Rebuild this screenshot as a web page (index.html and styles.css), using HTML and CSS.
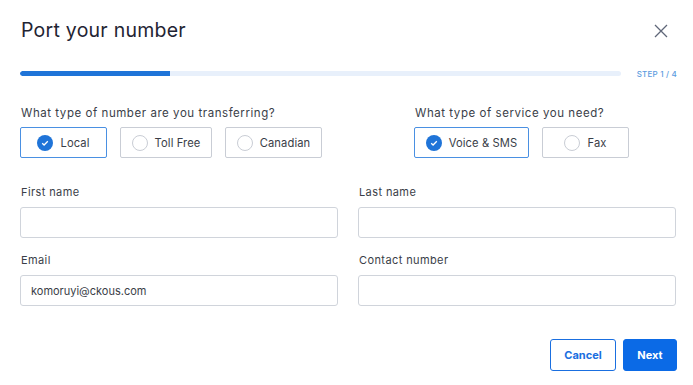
FILE: index.html
```html
<!DOCTYPE html>
<html>
<head>
<meta charset="utf-8">
<link rel="stylesheet" href="styles.css">
</head>
<body>
<div class="modal">
  <div class="header">
    <h1 class="title">Port your number</h1>
    <button class="close" aria-label="Close">
      <svg width="14" height="14" viewBox="0 0 14 14"><path d="M1 1L13 13M13 1L1 13" stroke="#5f6778" stroke-width="1.3" fill="none"/></svg>
    </button>
  </div>
  <div class="progress-row">
    <div class="track"><div class="fill" style="width:25%"></div></div>
    <span class="step">STEP 1 / 4</span>
  </div>
  <div class="choices">
    <div class="group group-left">
      <div class="label">What type of number are you transferring?</div>
      <div class="options">
        <div class="opt sel w-local"><span class="check"><svg width="16" height="16" viewBox="0 0 16 16"><circle cx="8" cy="8" r="8" fill="#1f74d8"/><path d="M5.2 8.2L7.1 10L10.8 6.3" stroke="#fff" stroke-width="1.3" fill="none"/></svg></span>Local</div>
        <div class="opt w-toll"><span class="circle"></span>Toll Free</div>
        <div class="opt w-can"><span class="circle"></span>Canadian</div>
      </div>
    </div>
    <div class="group">
      <div class="label">What type of service you need?</div>
      <div class="options">
        <div class="opt sel w-voice"><span class="check"><svg width="16" height="16" viewBox="0 0 16 16"><circle cx="8" cy="8" r="8" fill="#1f74d8"/><path d="M5.2 8.2L7.1 10L10.8 6.3" stroke="#fff" stroke-width="1.3" fill="none"/></svg></span>Voice &amp; SMS</div>
        <div class="opt w-fax"><span class="circle"></span>Fax</div>
      </div>
    </div>
  </div>
  <div class="fields">
    <div class="field"><div class="flabel">First name</div><div class="input"></div></div>
    <div class="field"><div class="flabel">Last name</div><div class="input"></div></div>
    <div class="field"><div class="flabel">Email</div><div class="input">komoruyi@ckous.com</div></div>
    <div class="field"><div class="flabel">Contact number</div><div class="input"></div></div>
  </div>
  <div class="actions">
    <button class="btn cancel">Cancel</button>
    <button class="btn next">Next</button>
  </div>
</div>
</body>
</html>
```
FILE: styles.css
```css
* { box-sizing: border-box; }
html, body { margin: 0; padding: 0; background: #fff; }
body { font-family: Inter, "Noto Sans", sans-serif; color: #2a2e38; }
.modal { width: 693px; height: 385px; padding: 17px 16px 0 20px; }
.header { display: flex; justify-content: space-between; align-items: center; height: 26px; }
.title { margin: 0 0 0 1px; font-size: 19.5px; font-weight: 400; color: #1f2433; letter-spacing: 0.25px; }
.close { background: none; border: none; padding: 0; margin-right: 9px; width: 14px; height: 14px; display: flex; margin-top: 2px; }
.progress-row { display: flex; align-items: center; margin-top: 28px; height: 5px; }
.track { width: 602px; height: 5px; background: #e8f0fb; border-radius: 3px; overflow: hidden; }
.fill { height: 100%; background: #1f74d8; border-radius: 3px 0 0 3px; }
.step { margin-left: 16px; font-size: 8px; font-weight: 500; color: #5b9be0; letter-spacing: 0.2px; white-space: nowrap; }
.choices { display: flex; margin-top: 30px; }
.group-left { width: 394px; }
.label { font-size: 11.5px; color: #3a3e48; letter-spacing: 0.55px; margin-left: 1px; line-height: 14px; }
.options { display: flex; gap: 13px; margin-top: 7px; }
.opt { height: 31px; border: 1px solid #c9cdd5; border-radius: 2px; display: flex; align-items: center; justify-content: center; font-size: 11.2px; color: #3a3e48; gap: 7px; letter-spacing: 0.1px; }
.opt.sel { border-color: #4a90e2; }
.w-local { width: 87px; }
.w-toll { width: 92px; }
.w-can { width: 97px; }
.w-voice { width: 115px; }
.w-fax { width: 87px; }
.check { width: 16px; height: 16px; display: flex; }
.circle { width: 16px; height: 16px; border: 1px solid #c9cdd5; border-radius: 50%; }
.fields { display: grid; grid-template-columns: 318px 318px; column-gap: 20px; row-gap: 15px; margin-top: 27px; }
.flabel { font-size: 11px; color: #3a3e48; letter-spacing: 0.4px; line-height: 14px; margin-left: 1px; }
.input { height: 31px; margin-top: 8px; border: 1px solid #d0d4db; border-radius: 3px; font-size: 11px; color: #3a3e48; padding-left: 10px; display: flex; align-items: center; }
.actions { display: flex; justify-content: flex-end; gap: 7px; margin-top: 33px; }
.btn { height: 32px; border-radius: 3px; font-family: Inter, "Noto Sans", sans-serif; font-size: 11px; font-weight: 700; padding: 0; }
.cancel { width: 66px; background: #fff; border: 1px solid #1a6fe0; color: #1a6fe0; }
.next { width: 54px; background: #0b6ae6; border: 1px solid #0b6ae6; color: #fff; }
```
